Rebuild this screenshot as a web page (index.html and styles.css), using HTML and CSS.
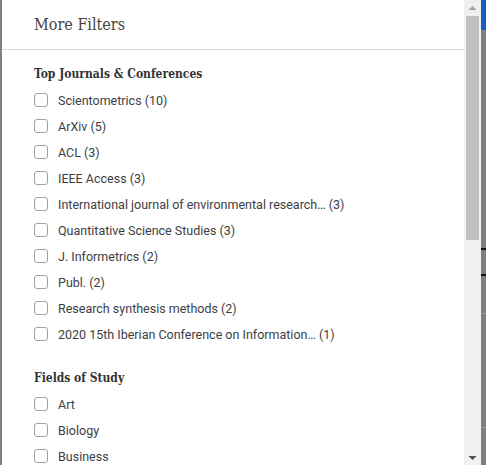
FILE: index.html
```html
<!DOCTYPE html>
<html lang="en">
<head>
<meta charset="utf-8">
<title>More Filters</title>
<link rel="stylesheet" href="styles.css">
</head>
<body>
<div class="backdrop-left"></div>
<div class="modal">
  <div class="modal-scroll">
    <header class="modal-header">
      <h2 class="modal-title">More Filters</h2>
    </header>
    <div class="modal-body">
      <section class="filter-group">
        <h3 class="group-title">Top Journals &amp; Conferences</h3>
        <ul class="option-list">
          <li class="option"><span class="box"></span><span class="label">Scientometrics (10)</span></li>
          <li class="option"><span class="box"></span><span class="label">ArXiv (5)</span></li>
          <li class="option"><span class="box"></span><span class="label">ACL (3)</span></li>
          <li class="option"><span class="box"></span><span class="label">IEEE Access (3)</span></li>
          <li class="option"><span class="box"></span><span class="label">International journal of environmental research… (3)</span></li>
          <li class="option"><span class="box"></span><span class="label">Quantitative Science Studies (3)</span></li>
          <li class="option"><span class="box"></span><span class="label">J. Informetrics (2)</span></li>
          <li class="option"><span class="box"></span><span class="label">Publ. (2)</span></li>
          <li class="option"><span class="box"></span><span class="label">Research synthesis methods (2)</span></li>
          <li class="option"><span class="box"></span><span class="label">2020 15th Iberian Conference on Information… (1)</span></li>
        </ul>
      </section>
      <section class="filter-group">
        <h3 class="group-title">Fields of Study</h3>
        <ul class="option-list">
          <li class="option"><span class="box"></span><span class="label">Art</span></li>
          <li class="option"><span class="box"></span><span class="label">Biology</span></li>
          <li class="option"><span class="box"></span><span class="label">Business</span></li>
        </ul>
      </section>
    </div>
  </div>
  <div class="scrollbar" aria-hidden="true">
    <div class="sb-button">
      <svg width="17" height="16" viewBox="0 0 17 16"><polygon points="4.5,10 8.5,6 12.5,10" fill="#a3a3a3"/></svg>
    </div>
    <div class="sb-track">
      <div class="sb-thumb"></div>
    </div>
    <div class="sb-button">
      <svg width="17" height="16" viewBox="0 0 17 16"><polygon points="4.5,7 12.5,7 8.5,11" fill="#505050"/></svg>
    </div>
  </div>
</div>
<div class="backdrop-right">
  <div class="bd-blue"></div>
  <div class="bd-gap1"></div>
  <div class="bd-black"></div>
  <div class="bd-gap2"></div>
  <div class="bd-black"></div>
  <div class="bd-gap3"></div>
  <div class="bd-line"></div>
  <div class="bd-gap4"></div>
  <div class="bd-line"></div>
</div>
</body>
</html>
```

FILE: styles.css
```css
html, body {
  margin: 0;
  padding: 0;
  height: 100%;
  overflow: hidden;
}
body {
  display: flex;
  background: #7f7f7f;
  font-family: Roboto, "Noto Sans", sans-serif;
}
.backdrop-left {
  width: 2px;
  flex: none;
  background: #808080;
}
.modal {
  width: 479px;
  flex: none;
  height: 465px;
  background: #fff;
  display: flex;
}
.modal-scroll {
  flex: 1;
  min-width: 0;
  overflow: hidden;
}
.modal-header {
  height: 49px;
  border-bottom: 1px solid #dcdcdc;
  padding: 0 32px;
  display: flex;
  align-items: center;
}
.modal-title {
  margin: 0;
  font-family: "DejaVu Serif", serif;
  font-stretch: condensed;
  font-weight: normal;
  font-size: 16px;
  color: #444;
}
.modal-body {
  padding: 14px 32px 14px;
}
.filter-group + .filter-group {
  margin-top: 21px;
}
.group-title {
  margin: 0 0 3px;
  height: 20px;
  line-height: 20px;
  font-family: "DejaVu Serif", serif;
  font-stretch: condensed;
  font-weight: bold;
  font-size: 12px;
  color: #333;
}
.option-list {
  list-style: none;
  margin: 0;
  padding: 0;
}
.option {
  height: 26px;
  display: flex;
  align-items: center;
}
.box {
  box-sizing: border-box;
  width: 14px;
  height: 14px;
  border: 1px solid #a0a0a0;
  border-radius: 3px;
  flex: none;
}
.label {
  margin-left: 10px;
  font-size: 12.5px;
  color: #3c4043;
  white-space: nowrap;
}
.scrollbar {
  width: 17px;
  flex: none;
  display: flex;
  flex-direction: column;
  background: #f0f0f0;
}
.sb-button {
  height: 16px;
  flex: none;
}
.sb-button svg {
  display: block;
}
.sb-track {
  flex: 1;
  padding: 0 2px;
}
.sb-thumb {
  height: 224px;
  background: #c1c1c1;
}
.backdrop-right {
  width: 5px;
  flex: none;
  display: flex;
  flex-direction: column;
}
.bd-blue { height: 30px; background: #1b5cc4; }
.bd-gap1 { height: 218px; }
.bd-black { height: 2px; background: #111; }
.bd-gap2 { height: 24px; }
.bd-gap3 { height: 37px; }
.bd-line { height: 1px; background: #9a9a9a; }
.bd-gap4 { height: 113px; }
```
